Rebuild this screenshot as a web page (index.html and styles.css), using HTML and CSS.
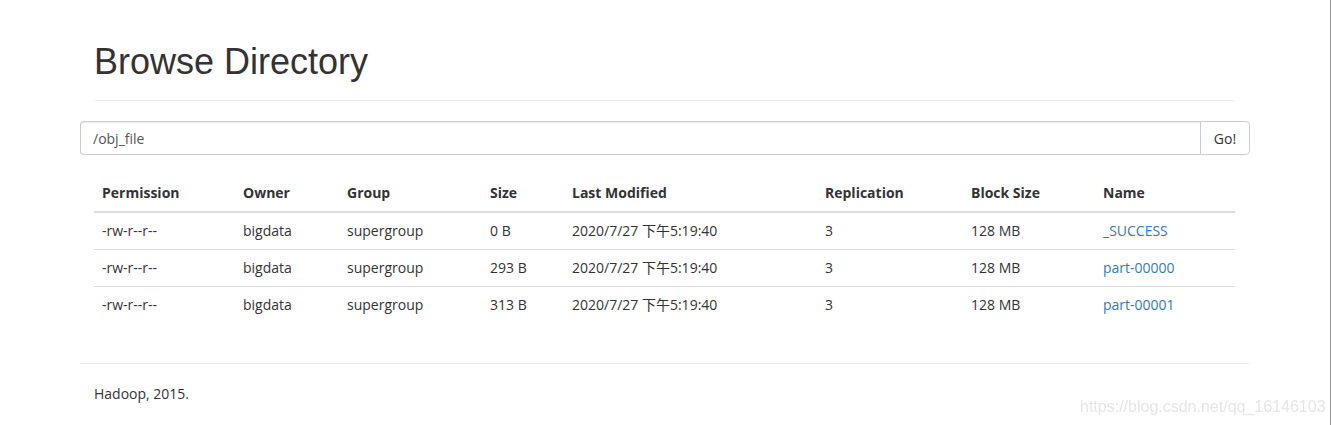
FILE: index.html
```html
<!DOCTYPE html>
<html>
<head>
<meta charset="utf-8">
<title>Browse Directory</title>
<link rel="stylesheet" href="styles.css">
</head>
<body>
<div class="viewport">
  <div class="container">
    <div class="page-header">
      <h1>Browse Directory</h1>
    </div>
    <form class="input-group">
      <input class="path-input" type="text" value="/obj_file">
      <button class="go-btn" type="button">Go!</button>
    </form>
    <div class="table-wrap">
      <table class="listing">
        <thead>
          <tr>
            <th class="c1">Permission</th>
            <th class="c2">Owner</th>
            <th class="c3">Group</th>
            <th class="c4">Size</th>
            <th class="c5">Last Modified</th>
            <th class="c6">Replication</th>
            <th class="c7">Block Size</th>
            <th class="c8">Name</th>
          </tr>
        </thead>
        <tbody>
          <tr>
            <td>-rw-r--r--</td><td>bigdata</td><td>supergroup</td><td>0 B</td><td>2020/7/27 下午5:19:40</td><td>3</td><td>128 MB</td><td><a href="#">_SUCCESS</a></td>
          </tr>
          <tr>
            <td>-rw-r--r--</td><td>bigdata</td><td>supergroup</td><td>293 B</td><td>2020/7/27 下午5:19:40</td><td>3</td><td>128 MB</td><td><a href="#">part-00000</a></td>
          </tr>
          <tr>
            <td>-rw-r--r--</td><td>bigdata</td><td>supergroup</td><td>313 B</td><td>2020/7/27 下午5:19:40</td><td>3</td><td>128 MB</td><td><a href="#">part-00001</a></td>
          </tr>
        </tbody>
      </table>
    </div>
    <hr class="footer-rule">
    <div class="footer">Hadoop, 2015.</div>
  </div>
</div>
<div class="edge"></div>
<div class="watermark">https://blog.csdn.net/qq_16146103</div>
</body>
</html>
```
FILE: styles.css
```css
html, body {
  margin: 0;
  padding: 0;
  background: #fff;
}
body {
  font-family: "Open Sans", "Noto Sans CJK SC", sans-serif;
  font-size: 14px;
  line-height: 20px;
  color: #333;
  overflow: hidden;
}
.viewport {
  width: 1330px;
}
.container {
  width: 1170px;
  margin: 0 auto;
  box-sizing: border-box;
}
.page-header {
  margin: 0 15px 20px 14px;
  padding-top: 42px;
  padding-bottom: 18px;
  border-bottom: 1px solid #eee;
}
.page-header h1 {
  margin: 0;
  font-family: "Liberation Sans", Arial, sans-serif;
  font-size: 36px;
  font-weight: 500;
  line-height: 40px;
  color: #333;
}
.input-group {
  display: flex;
  margin: 0 0 20px 0;
}
.path-input {
  flex: 1;
  height: 34px;
  box-sizing: border-box;
  border: 1px solid #ccc;
  border-right: 0;
  border-radius: 4px 0 0 4px;
  padding: 6px 12px;
  font-family: "Open Sans", sans-serif;
  font-size: 14px;
  color: #555;
  outline: none;
  box-shadow: inset 0 1px 1px rgba(0,0,0,0.075);
}
.go-btn {
  width: 50px;
  height: 34px;
  box-sizing: border-box;
  border: 1px solid #ccc;
  border-radius: 0 4px 4px 0;
  background: #fff;
  font-family: "Open Sans", sans-serif;
  font-size: 14px;
  color: #333;
  padding: 0;
}
.table-wrap {
  padding: 0 15px 0 14px;
}
.listing {
  width: 100%;
  border-collapse: collapse;
  margin-bottom: 20px;
}
.listing th, .listing td {
  text-align: left;
  padding: 8px;
  line-height: 20px;
  vertical-align: top;
}
.listing th {
  font-weight: 700;
  border-bottom: 2px solid #ddd;
}
.listing td {
  border-top: 1px solid #ddd;
}
.c1 { width: 125px; }
.c2 { width: 88px; }
.c3 { width: 127px; }
.c4 { width: 66px; }
.c5 { width: 237px; }
.c6 { width: 130px; }
.c7 { width: 116px; }
.listing a {
  color: #337ab7;
  text-decoration: none;
}
.footer-rule {
  margin: 40px 0 20px 0;
  border: 0;
  border-top: 1px solid #eee;
}
.footer {
  padding-left: 14px;
  line-height: 20px;
}
.edge {
  position: fixed;
  top: 0;
  right: 1px;
  width: 1px;
  height: 100%;
  background: #999;
}
.watermark {
  position: fixed;
  left: 1080px;
  top: 397px;
  font-family: "Liberation Sans", Arial, sans-serif;
  font-size: 16px;
  color: #e6e6e6;
  white-space: nowrap;
}
```
